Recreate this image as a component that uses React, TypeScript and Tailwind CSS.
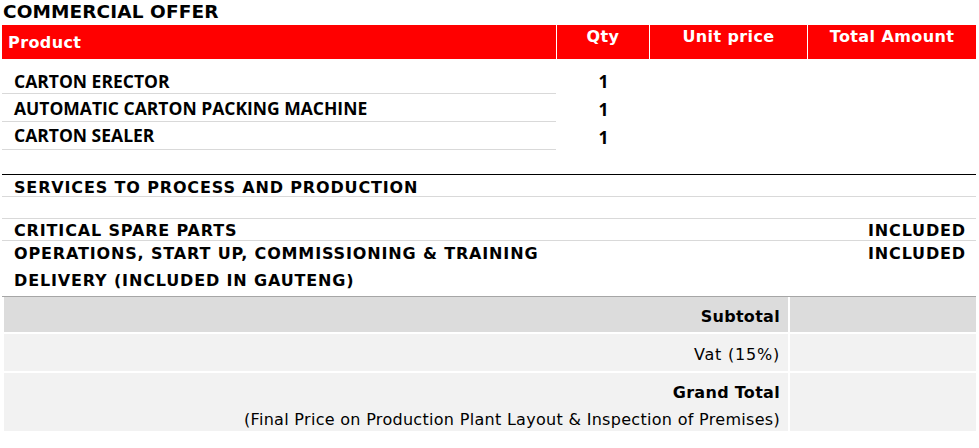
import React from "react";

const V = { fontFamily: '"DejaVu Sans", Verdana, sans-serif' };
const P = { fontFamily: '"Open Sans", "Noto Sans", sans-serif' };

export default function App() {
  const products = ["CARTON ERECTOR", "AUTOMATIC CARTON PACKING MACHINE", "CARTON SEALER"];
  return (
    <div className="w-[979px] h-[448px] bg-white text-black overflow-hidden">
      <div style={V} className="pl-[3px] pt-[2px] h-[25px] text-[18.5px] font-bold leading-[20px] tracking-[0.1px]">COMMERCIAL OFFER</div>
      <div className="ml-[2px] w-[974px]">
        {/* header */}
        <div style={V} className="flex h-[34px] bg-[#ff0000] text-white font-bold text-[16px] tracking-[0.4px]">
          <div className="w-[554px] pl-[6px] pt-[8px] leading-[20px]">Product</div>
          <div className="w-px bg-white" />
          <div className="w-[92px] text-center pt-[2px] leading-[20px]">Qty</div>
          <div className="w-px bg-white" />
          <div className="w-[157px] text-center pt-[2px] leading-[20px]">Unit price</div>
          <div className="w-px bg-white" />
          <div className="flex-1 text-center pt-[2px] leading-[20px]">Total Amount</div>
        </div>
        {/* products */}
        <div className="pt-[8px] h-[115px]">
          {products.map((p, i) => (
            <div key={p} className="flex">
              <div style={P} className={`w-[554px] pl-[12px] font-bold text-[17.5px] border-b border-[#d9d9d9] ${i === 0 ? "h-[27px] leading-[28px]" : i === 1 ? "h-[27px] leading-[26px]" : "h-[27px] leading-[24px]"}`}>
                {p}
              </div>
              <div style={P} className="w-[93px] text-center font-bold text-[17.5px] leading-[28px] ml-px">1</div>
            </div>
          ))}
        </div>
        {/* services */}
        <div style={V} className="border-t border-black font-bold text-[16px] tracking-[0.85px]">
          <div className="h-[22px] border-b border-[#d9d9d9] pl-[12px] leading-[26px]">SERVICES TO PROCESS AND PRODUCTION</div>
          <div className="h-[22px] border-b border-[#d9d9d9]" />
          <div className="h-[22px] border-b border-[#d9d9d9] flex justify-between pl-[12px] pr-[10px] leading-[24px]">
            <span>CRITICAL SPARE PARTS</span>
            <span>INCLUDED</span>
          </div>
          <div className="flex justify-between pl-[12px] pr-[10px] h-[27px] leading-[26px]">
            <span>OPERATIONS, START UP, COMMISSIONING &amp; TRAINING</span>
            <span>INCLUDED</span>
          </div>
          <div className="pl-[12px] h-[28px] leading-[26px]">DELIVERY (INCLUDED IN GAUTENG)</div>
        </div>
      </div>
      {/* footer */}
      <div style={V} className="ml-[2px] w-[974px] border-t border-[#a6a6a6] text-[16px] tracking-[0.3px]">
        <div className="ml-[2px] flex flex-col gap-[2px]">
          <div className="flex h-[35px] gap-[2px]">
            <div className="flex-1 bg-[#dcdcdc] text-right pr-[8px] font-bold leading-[40px]">Subtotal</div>
            <div className="w-[186px] bg-[#dcdcdc]" />
          </div>
          <div className="flex h-[37px] gap-[2px]">
            <div className="flex-1 bg-[#f2f2f2] text-right pr-[8px] leading-[42px] tracking-[0.8px]">Vat (15%)</div>
            <div className="w-[186px] bg-[#f2f2f2]" />
          </div>
          <div className="flex h-[58px] gap-[2px]">
            <div className="flex-1 bg-[#f2f2f2] text-right pr-[8px] pt-[10px]">
              <div className="font-bold leading-[20px]">Grand Total</div>
              <div className="leading-[20px] mt-[7px]">(Final Price on Production Plant Layout &amp; Inspection of Premises)</div>
            </div>
            <div className="w-[186px] bg-[#f2f2f2]" />
          </div>
        </div>
      </div>
    </div>
  );
}
